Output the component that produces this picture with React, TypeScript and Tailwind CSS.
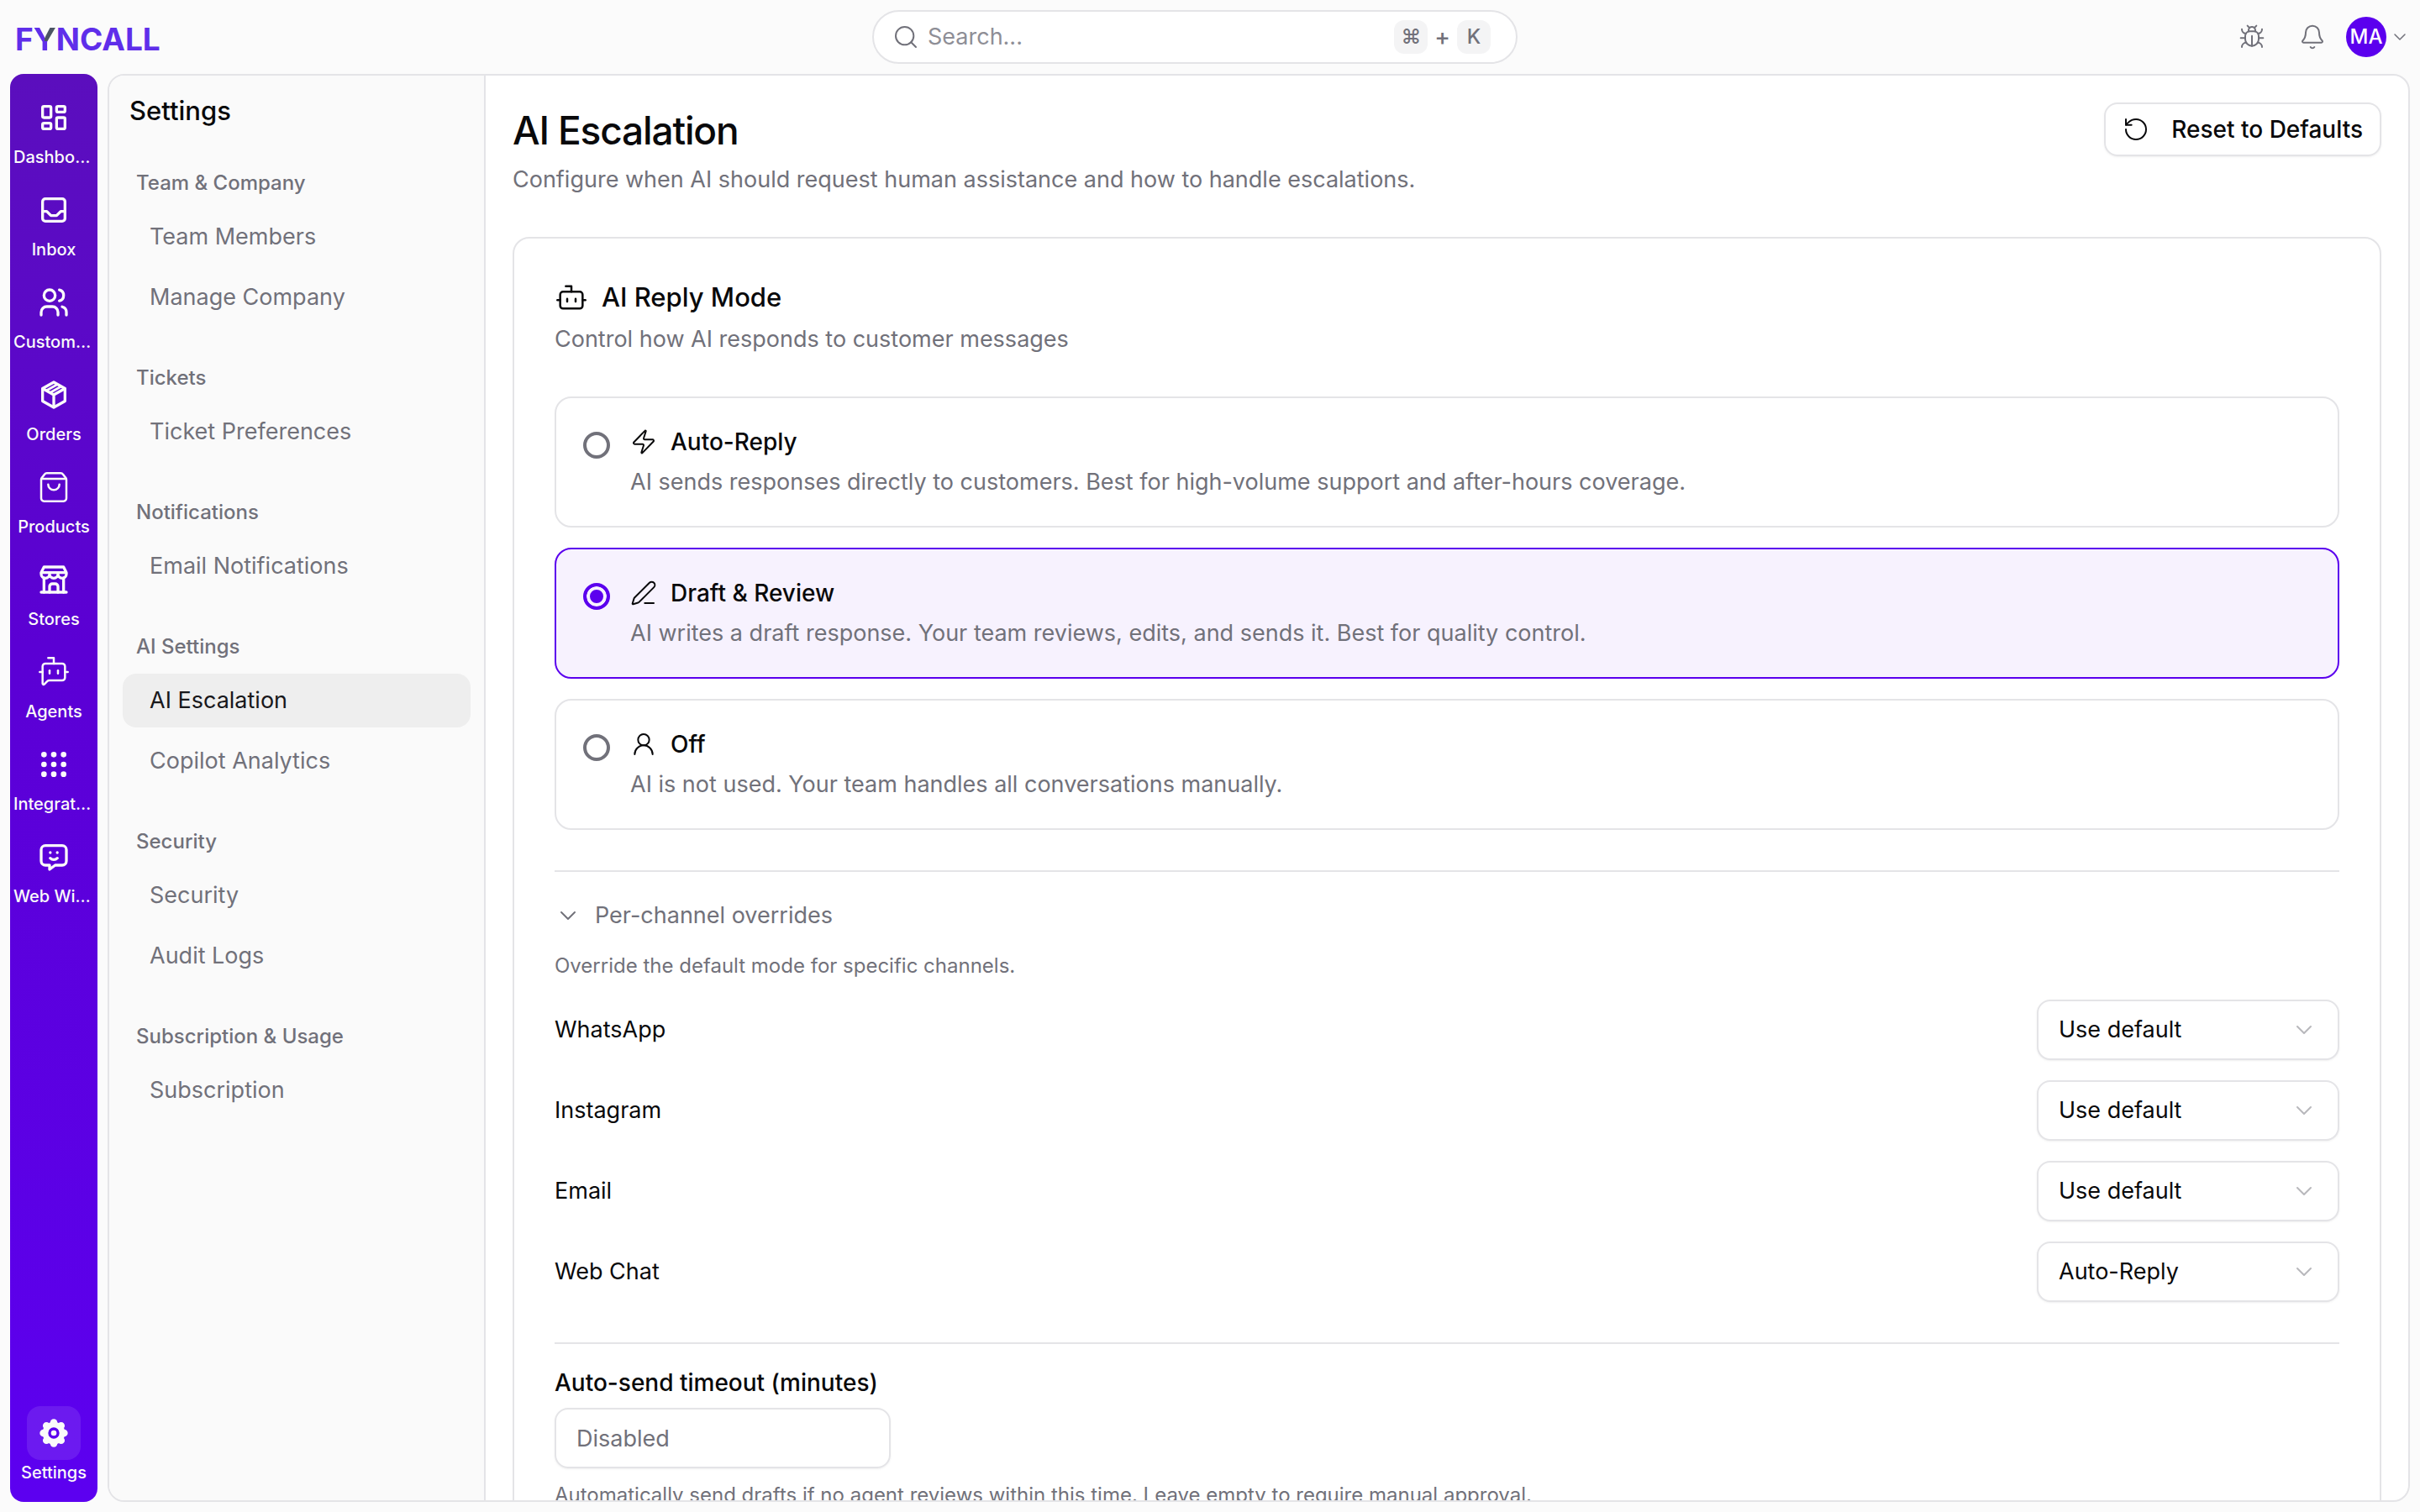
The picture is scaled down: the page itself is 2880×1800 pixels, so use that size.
import { useState } from "react"
import {
  Bell,
  Bot,
  BotMessageSquare,
  Bug,
  ChevronDown,
  PenLine,
  RotateCcw,
  Search,
  ShoppingBag,
  UserRound,
  Zap,
} from "lucide-react"
import { TbBuildingStore, TbGridDots, TbInbox, TbLayoutDashboard, TbUsers } from "react-icons/tb"

function OrdersIcon({ className }: { className?: string }) {
  return (
    <svg viewBox="0 0 24 24" fill="none" stroke="currentColor" strokeWidth={2} strokeLinejoin="round" className={className}>
      <path d="M12 3l8 4.5v9L12 21l-8-4.5v-9L12 3z" />
      <path d="M4 7.5l8 4.5 8-4.5M12 12v9" />
      <path d="M6.67 9l8-4.5M9.33 10.5l8-4.5" strokeWidth={1.6} />
    </svg>
  )
}

function WidgetIcon({ className }: { className?: string }) {
  return (
    <svg
      viewBox="0 0 24 24"
      fill="none"
      stroke="currentColor"
      strokeWidth={2}
      strokeLinecap="round"
      strokeLinejoin="round"
      className={className}
    >
      <path d="M18 4a3 3 0 0 1 3 3v8a3 3 0 0 1-3 3h-5l-4 3v-3H6a3 3 0 0 1-3-3V7a3 3 0 0 1 3-3h12z" />
      <path d="M9.5 9h.01M14.5 9h.01M9.5 13a3.5 3.5 0 0 0 5 0" />
    </svg>
  )
}

const petals = [0, 45, 90, 135, 180, 225, 270, 315]

function GearIcon({ className }: { className?: string }) {
  return (
    <svg viewBox="0 0 24 24" className={className}>
      <g fill="currentColor">
        <circle cx="12" cy="12" r="8" />
        {petals.map((angle) => (
          <circle key={angle} cx="12" cy="4.6" r="2.6" transform={`rotate(${angle} 12 12)`} />
        ))}
      </g>
      <circle cx="12" cy="12" r="3" fill="none" stroke="#5b00ee" strokeWidth="2" />
    </svg>
  )
}

const mainNav = [
  { label: "Dashboard", icon: <TbLayoutDashboard className="size-10" /> },
  { label: "Inbox", icon: <TbInbox className="size-10" /> },
  { label: "Customers", icon: <TbUsers className="size-10" /> },
  { label: "Orders", icon: <OrdersIcon className="size-10" /> },
  { label: "Products", icon: <ShoppingBag className="size-10" strokeWidth={1.5} /> },
  { label: "Stores", icon: <TbBuildingStore className="size-10" /> },
  { label: "Agents", icon: <BotMessageSquare className="size-10" strokeWidth={1.5} /> },
  { label: "Integrations", icon: <TbGridDots className="size-10" /> },
  { label: "Web Widget", icon: <WidgetIcon className="size-10" /> },
]

const settingsNav = [
  { title: "Team & Company", items: ["Team Members", "Manage Company"] },
  { title: "Tickets", items: ["Ticket Preferences"] },
  { title: "Notifications", items: ["Email Notifications"] },
  { title: "AI Settings", items: ["AI Escalation", "Copilot Analytics"] },
  { title: "Security", items: ["Security", "Audit Logs"] },
  { title: "Subscription & Usage", items: ["Subscription"] },
]

const replyModes = [
  {
    id: "auto",
    title: "Auto-Reply",
    description: "AI sends responses directly to customers. Best for high-volume support and after-hours coverage.",
    icon: Zap,
  },
  {
    id: "draft",
    title: "Draft & Review",
    description: "AI writes a draft response. Your team reviews, edits, and sends it. Best for quality control.",
    icon: PenLine,
  },
  {
    id: "off",
    title: "Off",
    description: "AI is not used. Your team handles all conversations manually.",
    icon: UserRound,
  },
]

const channels = [
  { id: "whatsapp", label: "WhatsApp", value: "Use default" },
  { id: "instagram", label: "Instagram", value: "Use default" },
  { id: "email", label: "Email", value: "Use default" },
  { id: "webchat", label: "Web Chat", value: "Auto-Reply" },
]

function Header() {
  return (
    <header className="flex h-[88px] shrink-0 items-center pr-3 pl-[18px]">
      <a href="#" className="w-44 shrink-0 pt-1 text-[37px] leading-none font-bold text-[#5f2eea]">
        F
        <span className="bg-[conic-gradient(from_0deg_at_50%_55%,#4b5563_90deg,#5f2eea_0)] bg-clip-text text-transparent">
          Y
        </span>
        NCALL
      </a>

      <div className="flex min-w-0 flex-1 justify-center">
        <div className="flex h-16 w-full max-w-3xl items-center rounded-full border-2 border-[#e4e4e7] bg-white pr-[30px] pl-[22px] text-[#71717a]">
          <Search className="size-8 shrink-0" strokeWidth={1.5} />
          <input
            type="search"
            aria-label="Search"
            placeholder="Search..."
            className="ml-2.5 min-w-0 flex-1 bg-transparent text-[27px] outline-none placeholder:text-[#8e8e96]"
          />
          <div className="flex items-center gap-2 text-2xl font-medium">
            <kbd className="flex size-10 items-center justify-center rounded-xl bg-[#f4f4f5] font-[Inter]">⌘</kbd>
            <span className="text-[28px] leading-10">+</span>
            <kbd className="flex size-10 items-center justify-center rounded-xl bg-[#f4f4f5] font-[Inter]">K</kbd>
          </div>
        </div>
      </div>

      <div className="flex shrink-0 items-center pl-3.5 text-[#71717a]">
        <button aria-label="Report a bug" className="mr-10">
          <Bug className="size-8" strokeWidth={1.5} />
        </button>
        <button aria-label="Notifications" className="mr-6">
          <Bell className="size-8" strokeWidth={1.5} />
        </button>
        <button className="flex items-center gap-1">
          <span className="flex size-12 items-center justify-center rounded-full bg-[#5b00ee] text-2xl font-medium text-white">
            MA
          </span>
          <ChevronDown className="size-6" strokeWidth={1.5} />
        </button>
      </div>
    </header>
  )
}

function Sidebar() {
  return (
    <nav className="flex w-[104px] shrink-0 flex-col items-center justify-between rounded-2xl bg-linear-to-b from-[#5b0ebd] via-[#5b00d4] via-40% to-[#5c00f0] py-5 text-[#fafafa]">
      <ul className="flex flex-col gap-4">
        {mainNav.map((item) => (
          <li key={item.label}>
            <a href="#" className="flex w-24 flex-col items-center">
              <span className="flex size-16 items-center justify-center">{item.icon}</span>
              <span className="max-w-full truncate text-xl leading-[30px] font-medium">{item.label}</span>
            </a>
          </li>
        ))}
      </ul>
      <a href="#" className="flex w-24 flex-col items-center">
        <span className="flex size-16 items-center justify-center rounded-2xl bg-white/10">
          <GearIcon className="size-10" />
        </span>
        <span className="text-xl leading-[30px] font-medium">Settings</span>
      </a>
    </nav>
  )
}

function SettingsNav() {
  return (
    <aside className="w-[448px] shrink-0 border-r-2 border-[#e4e4e7] bg-[#fafafa] px-4">
      <h2 className="px-2 pt-5 pb-8 text-[31px] leading-[44px] font-medium">Settings</h2>
      <div className="flex flex-col gap-8">
        {settingsNav.map((group) => (
          <div key={group.title}>
            <h3 className="px-4 text-2xl leading-[64px] font-medium text-[#71717a]">{group.title}</h3>
            <ul className="flex flex-col gap-2">
              {group.items.map((item) => (
                <li key={item}>
                  <a
                    href="#"
                    className={`block rounded-2xl px-8 text-[27px] leading-[64px] ${
                      item === "AI Escalation" ? "bg-[#eeeeee] text-[#18181b]" : "text-[#71717a]"
                    }`}
                  >
                    {item}
                  </a>
                </li>
              ))}
            </ul>
          </div>
        ))}
      </div>
    </aside>
  )
}

function ReplyModeOptions() {
  const [mode, setMode] = useState("draft")

  return (
    <div className="flex flex-col gap-6">
      {replyModes.map((option) => (
        <label
          key={option.id}
          className={`flex gap-6 rounded-[20px] border-2 px-8 py-[30px] ${
            mode === option.id ? "border-[#5b00ee] bg-[#f7f2fe]" : "border-[#e4e4e7]"
          }`}
        >
          <input
            type="radio"
            name="reply-mode"
            checked={mode === option.id}
            onChange={() => setMode(option.id)}
            className="mt-2.5 size-8 shrink-0 appearance-none rounded-full border-4 border-[#71717a] checked:border-[#5b00ee] checked:bg-[#5b00ee] checked:shadow-[inset_0_0_0_4px_#f7f2fe]"
          />
          <span className="flex flex-col gap-1 leading-[44px]">
            <span className="flex items-center gap-4 text-[28px] leading-[44px] font-medium">
              <option.icon className="size-8" strokeWidth={1.5} />
              {option.title}
            </span>
            <span className="text-[27px] leading-[44px] text-[#71717a]">{option.description}</span>
          </span>
        </label>
      ))}
    </div>
  )
}

function ChannelOverrides() {
  return (
    <div className="mt-12 border-t-2 border-[#e4e4e7] pt-5">
      <button className="flex h-16 items-center gap-4 text-[27px] text-[#71717a]">
        <ChevronDown className="size-8" strokeWidth={1.5} />
        Per-channel overrides
      </button>
      <p className="mt-3 text-2xl leading-8 text-[#71717a]">Override the default mode for specific channels.</p>
      <div className="mt-6 flex flex-col gap-6">
        {channels.map((channel) => (
          <div key={channel.id} className="flex items-center justify-between">
            <label htmlFor={channel.id} className="text-[27px]">
              {channel.label}
            </label>
            <div className="relative w-[360px]">
              <select
                id={channel.id}
                defaultValue={channel.value}
                className="h-[72px] w-full appearance-none rounded-2xl border-2 border-[#e4e4e7] bg-white px-6 text-[27px] shadow-sm shadow-black/5"
              >
                <option>Use default</option>
                <option>Auto-Reply</option>
                <option>Draft & Review</option>
                <option>Off</option>
              </select>
              <ChevronDown
                className="pointer-events-none absolute top-5 right-[26px] size-8 text-[#b8b8bc]"
                strokeWidth={1.5}
              />
            </div>
          </div>
        ))}
      </div>
    </div>
  )
}

export default function App() {
  return (
    <div className="flex h-screen flex-col overflow-hidden bg-[#fbfbfb] font-[Inter,sans-serif] text-[#09090b]">
      <Header />

      <div className="flex min-h-0 flex-1 gap-3 px-3 pb-3">
        <Sidebar />

        <div className="flex min-w-0 flex-1 overflow-hidden rounded-[20px] border-2 border-[#e4e4e7] bg-white">
          <SettingsNav />

          <main className="min-w-0 flex-1 overflow-hidden p-8">
            <div className="flex items-start justify-between">
              <div>
                <h1 className="text-[46px] leading-[66px] font-medium tracking-tight">AI Escalation</h1>
                <p className="mt-1.5 text-[27px] leading-[40px] text-[#71717a]">
                  Configure when AI should request human assistance and how to handle escalations.
                </p>
              </div>
              <button className="flex h-16 items-center gap-[26px] rounded-2xl border-2 border-[#e4e4e7] px-5 text-[28px] font-medium shadow-sm shadow-black/5">
                <RotateCcw className="size-8" strokeWidth={1.5} />
                Reset to Defaults
              </button>
            </div>

            {/* Reply mode card */}
            <section className="mt-12 rounded-[20px] border-2 border-[#e4e4e7] p-12">
              <h2 className="flex items-center gap-4 text-[31px] leading-[44px] font-medium">
                <Bot className="size-10" strokeWidth={1.5} />
                AI Reply Mode
              </h2>
              <p className="mt-2 mb-12 text-[27px] leading-[40px] text-[#71717a]">
                Control how AI responds to customer messages
              </p>

              <ReplyModeOptions />
              <ChannelOverrides />

              {/* Auto-send timeout */}
              <div className="mt-12 border-t-2 border-[#e4e4e7] pt-6">
                <label htmlFor="timeout" className="block text-[28px] leading-[44px] font-medium">
                  Auto-send timeout (minutes)
                </label>
                <input
                  id="timeout"
                  type="text"
                  placeholder="Disabled"
                  className="mt-2 h-[72px] w-[400px] rounded-2xl border-2 border-[#e4e4e7] px-6 text-[27px] shadow-sm shadow-black/5 placeholder:text-[#71717a]"
                />
                <p className="mt-4 text-2xl leading-8 text-[#71717a]">
                  Automatically send drafts if no agent reviews within this time. Leave empty to require manual approval.
                </p>
              </div>
            </section>
          </main>
        </div>
      </div>
    </div>
  )
}
